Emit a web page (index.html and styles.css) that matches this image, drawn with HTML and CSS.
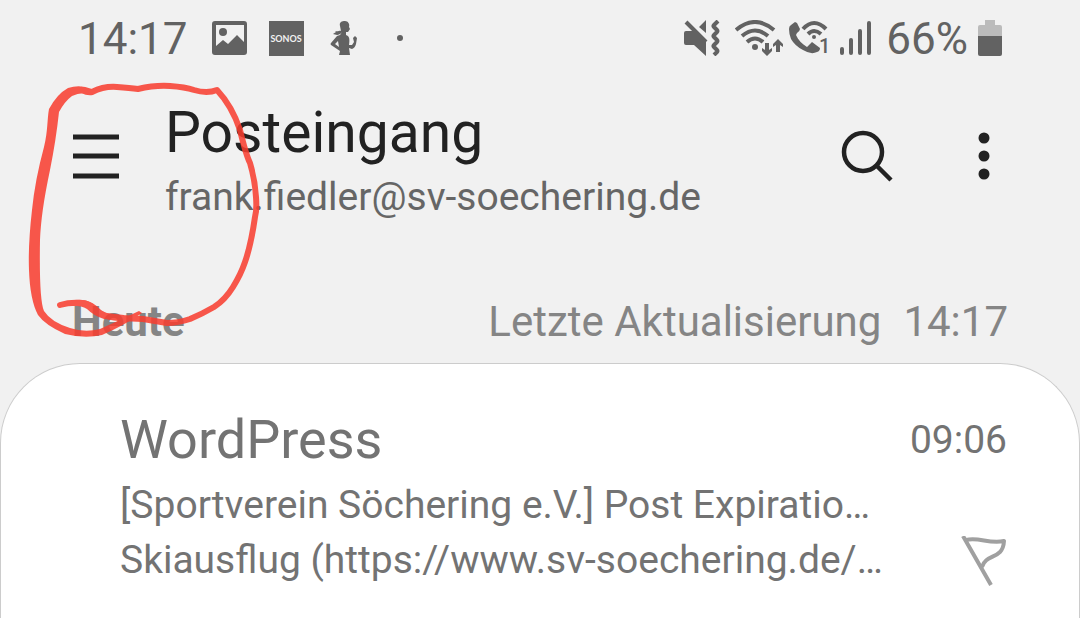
FILE: index.html
```html
<!DOCTYPE html>
<html lang="de">
<head>
<meta charset="utf-8">
<meta name="viewport" content="width=device-width, initial-scale=1">
<title>Posteingang</title>
<link rel="stylesheet" href="styles.css">
</head>
<body>
<div class="statusbar">
  <div class="status-left">
    <span class="clock">14:17</span>
    <svg class="status-icon" width="36" height="36" viewBox="0 0 36 36" aria-hidden="true">
      <path fill="currentColor" fill-rule="evenodd" d="M3 1H32Q35 1 35 4V32Q35 35 32 35H3Q0 35 0 32V4Q0 1 3 1ZM4 5V26L11 20L16 24L25 15L32 22V5Z"/>
      <circle cx="11" cy="12" r="4" fill="currentColor"/>
    </svg>
    <span class="sonos">SONOS</span>
    <svg class="runner" width="28" height="36" viewBox="0 0 28 36" aria-hidden="true">
      <path fill="currentColor" fill-rule="evenodd" d="M10 6C9 2 12 1 15 1C18 1 20 4 19 7L20 9L18 12H16V15C19 16 20 18 19 25L22 25L24 22L23 18L25 16L27 18L26 24Q25 28 22 29L19 28L20 35H9L10 31L1 25Q0 24 1 23L7 16L10 15L12 12C9 16 6 15 3 14L6 12L5 11C8 12 10 10 11 11ZM8 21L5 24L9 27Z"/>
    </svg>
    <span class="dot"></span>
  </div>
  <div class="status-right">
    <svg class="mute" width="36" height="36" viewBox="0 0 36 36" aria-label="Vibration">
      <path fill="currentColor" d="M2 11H11L22 21V36L10 25H2Q0 25 0 23V13Q0 11 2 11ZM22 0V13L15 7Z"/>
      <path d="M2 2L22 22" stroke="currentColor" stroke-width="4"/>
      <path d="M34 1L30 5Q29 6 30 7L33 10Q34 11 33 12L30 15Q29 16 30 17L33 20Q34 21 33 22L30 25Q29 26 30 27L33 30Q34 31 33 32L30 35" fill="none" stroke="currentColor" stroke-width="4"/>
    </svg>
    <svg class="wifi" width="48" height="36" viewBox="0 0 48 36" aria-label="WLAN">
      <g fill="none" stroke="currentColor" stroke-width="4"><path d="M1 10Q20 -6 39 10M7 16Q20 5 33 16M12 22Q20 15 28 22"/></g>
      <circle cx="20" cy="27" r="3" fill="currentColor"/>
      <path fill="currentColor" d="M30 23H34V30L37 28V31L32 36L27 31V28L30 30ZM41 32V25L38 27V24L43 19L48 24V27L45 25V32Z"/>
    </svg>
    <svg class="call" width="42" height="40" viewBox="0 0 42 40" aria-label="WLAN-Anruf">
      <path fill="currentColor" d="M0 11Q0 8 2 7L6 4L8 5L11 11Q11 13 8 15L7 17C9 22 13 26 18 29L23 24L31 30Q31 33 28 34Q22 37 14 32Q6 28 2 21Q0 16 0 11Z"/>
      <g fill="none" stroke="currentColor" stroke-width="4"><path d="M14 11Q25 -1 37 11M19 16Q25 10 32 16"/></g>
      <circle cx="25" cy="19" r="2" fill="currentColor"/>
      <text class="sim" x="30" y="35" fill="currentColor">1</text>
    </svg>
    <svg class="signal" width="32" height="36" viewBox="0 0 32 36" aria-label="Empfang">
      <path d="M2 29V33M11 20V33M20 11V33M29 3V33" stroke="currentColor" stroke-width="4" stroke-linecap="round"/>
    </svg>
    <span class="percent">66%</span>
    <svg width="24" height="37" viewBox="0 0 24 37" aria-label="Akku">
      <path fill="#bbb" d="M7 0H17V5H22Q24 5 24 7V17H0V7Q0 5 2 5H7Z"/>
      <path fill="currentColor" d="M0 16H24V34Q24 36 22 36H2Q0 36 0 34Z"/>
    </svg>
  </div>
</div>

<header class="appbar">
  <button class="icon-button" type="button" aria-label="Menü">
    <svg width="48" height="46" viewBox="0 0 48 46"><path d="M1 4H47M1 23H47M1 43H47" stroke="currentColor" stroke-width="5"/></svg>
  </button>
  <div class="titles">
    <h1>Posteingang</h1>
    <p>frank.fiedler@sv-soechering.de</p>
  </div>
  <button class="icon-button search-button" type="button" aria-label="Suchen">
    <svg width="52" height="52" viewBox="0 0 52 52" fill="none" stroke="currentColor" stroke-width="4.500"><circle cx="22" cy="22" r="19"/><path d="M35 35L50 50"/></svg>
  </button>
  <button class="icon-button" type="button" aria-label="Weitere Optionen">
    <svg width="12" height="48" viewBox="0 0 12 48" fill="currentColor"><circle cx="6" cy="6" r="5.500"/><circle cx="6" cy="24" r="5.500"/><circle cx="6" cy="42" r="5.500"/></svg>
  </button>
</header>

<div class="section-head">
  <h2>Heute</h2>
  <p class="updated"><span>Letzte Aktualisierung</span><span>14:17</span></p>
</div>

<main class="card">
  <article class="mail">
    <div class="mail-top">
      <h3>WordPress</h3>
      <time>09:06</time>
    </div>
    <div class="mail-body">
      <div class="mail-text">
        <p>[Sportverein Söchering e.V.] Post Expiratio…</p>
        <p>Skiausflug (https://www.sv-soechering.de/…</p>
      </div>
      <button class="icon-button flag" type="button" aria-label="Markieren">
        <svg width="46" height="52" viewBox="0 0 46 52" fill="none" stroke="currentColor" stroke-width="4"><path d="M2 0L30 49M5 4C18 1 28 8 43 5C42 24 25 17 21 31" stroke-linejoin="round"/></svg>
      </button>
    </div>
  </article>
</main>

<svg class="marking" width="280" height="350" viewBox="0 0 280 350" aria-hidden="true">
  <path fill="#f93d2f" d="M92 89Q80 84 68 88Q57 94 49 109C47 120 48 130 44 147Q35 180 32 210Q28 245 29 270Q30 300 38 315Q45 325 65 334Q85 339 102 335Q125 325 142 313L139 311Q120 320 100 329Q85 333 70 328Q51 322 44 311Q39 300 40 240Q41 212 50 170Q56 140 59 112Q65 101 72 96Q82 91 92 95Z"/>
  <path fill="none" stroke="#f93d2f" stroke-width="6" stroke-linecap="round" stroke-linejoin="round" d="M82 90Q88 93 92 92Q104 86 117 87T138 89Q155 85 170 86T194 90Q207 94 217 90Q232 106 240 130Q246 155 250 163Q255 180 256 197Q257 210 255 217Q251 245 245 262Q241 274 233 287T214 307Q202 314 190 319Q178 323 167 323Q155 321 143 319L120 318Q108 318 100 313Q90 303 82 303Q70 302 60 305"/>
  <path fill="#f93d2f" d="M70 301Q82 298 90 302Q98 310 106 313L124 315V321L104 319Q94 316 87 309Q80 305 70 306Z"/>
</svg>
</body>
</html>
```
FILE: styles.css
```css
* {
  box-sizing: border-box;
}

body {
  position: relative;
  display: flex;
  flex-direction: column;
  min-height: 100vh;
  margin: 0;
  background: #f1f1f1;
  color: #737373;
  font-family: Roboto, "Liberation Sans", sans-serif;
  overflow-x: hidden;
}

h1, h2, h3, p {
  margin: 0;
  font-weight: 400;
}

svg {
  display: block;
  flex: none;
}

.statusbar {
  display: flex;
  justify-content: space-between;
  align-items: center;
  height: 76px;
  padding: 0 78px;
  color: #626262;
}

.status-left,
.status-right {
  display: flex;
  align-items: center;
}

.clock,
.percent {
  padding-top: 2px;
  font-size: 44px;
  line-height: 52px;
}

.status-icon {
  margin-left: 24px;
}

.sonos {
  display: flex;
  align-items: center;
  justify-content: center;
  width: 35px;
  height: 35px;
  margin-left: 21px;
  background: #626262;
  color: #f1f1f1;
  font-family: Lato, sans-serif;
  font-size: 9px;
  font-weight: 700;
}

.runner {
  margin-left: 26px;
}

.dot {
  width: 6px;
  height: 6px;
  margin-left: 39px;
  border-radius: 50%;
  background: #626262;
}

.mute {
  margin-right: 15px;
}

.wifi {
  margin-right: 6px;
}

.call {
  margin-right: 9px;
}

.sim {
  font-size: 20px;
  font-weight: 500;
}

.signal {
  margin-right: 14px;
}

.percent {
  margin-right: 10px;
}

.appbar {
  display: flex;
  align-items: flex-start;
  padding: 24px 90px 0 72px;
  color: #222;
}

.icon-button {
  display: flex;
  flex: none;
  align-items: center;
  height: 112px;
  padding: 0;
  border: 0;
  background: none;
  color: inherit;
}

.titles {
  flex: 1;
  min-width: 0;
  margin-left: 45px;
}

h1 {
  font-size: 57px;
  line-height: 66px;
}

.titles p {
  color: #666;
  font-size: 39px;
  line-height: 62px;
}

.search-button {
  margin-right: 85px;
}

.section-head {
  display: flex;
  justify-content: space-between;
  align-items: center;
  padding: 68px 72px 15px;
  color: #858585;
  font-size: 42px;
  line-height: 52px;
}

h2 {
  font-size: 42px;
  font-weight: 700;
}

.updated {
  display: flex;
  gap: 22px;
}

.card {
  flex: 1;
  padding: 44px 72px 24px 119px;
  border: 1px solid #ccc;
  border-bottom: 0;
  border-radius: 80px 80px 0 0;
  background: #fff;
}

.mail-top,
.mail-body {
  display: flex;
  justify-content: space-between;
  align-items: center;
}

h3 {
  font-size: 54px;
  line-height: 64px;
}

time {
  font-size: 39px;
  line-height: 64px;
}

.mail-text {
  min-width: 0;
  padding-top: 6px;
  font-size: 39px;
  line-height: 55px;
}

.flag {
  align-self: flex-end;
  height: 52px;
  color: #a0a0a0;
}

.marking {
  position: absolute;
  top: 0;
  left: 0;
  opacity: 0.86;
  pointer-events: none;
}
```
